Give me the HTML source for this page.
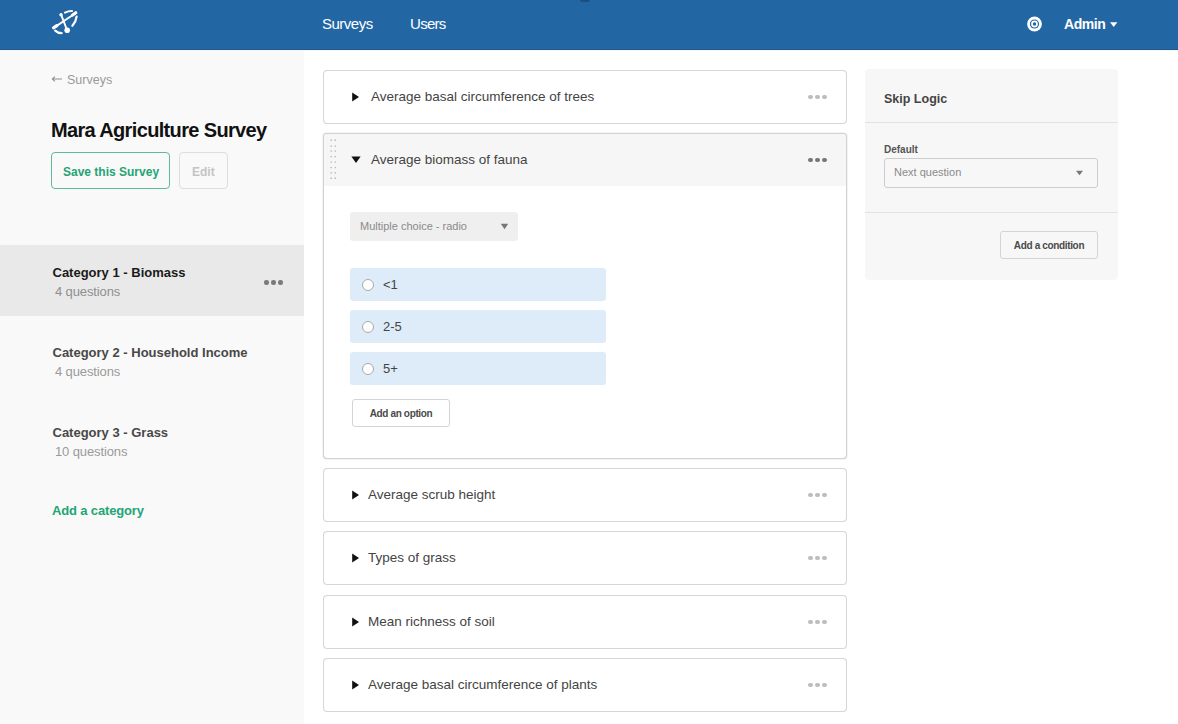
<!DOCTYPE html>
<html><head><meta charset="utf-8">
<style>
*{margin:0;padding:0;box-sizing:border-box}
html,body{width:1178px;height:724px;overflow:hidden;background:#fff;font-family:"Liberation Sans",sans-serif;position:relative}
.a{position:absolute;white-space:nowrap}
#hdr{position:absolute;left:0;top:0;width:1178px;height:50px;background:#2366a4;border-bottom:1px solid #22598c;z-index:3}
#hl{position:absolute;left:0;top:50px;width:1178px;height:1px;background:#f3f7fb;z-index:2}
#side{position:absolute;left:0;top:49px;width:304px;height:675px;background:#f9f9f9}
.card{position:absolute;left:323px;width:524px;height:54px;border:1px solid #d6d6d6;border-radius:4px;background:#fff;box-shadow:0 0 0.6px rgba(0,0,0,.12)}
.tri{position:absolute;width:0;height:0;border-top:4.5px solid transparent;border-bottom:4.5px solid transparent;border-left:7px solid #111}
.ct{position:absolute;left:371px;font-size:13.5px;color:#444}
.dots{position:absolute;width:20px;height:5px}
.dots i{position:absolute;top:0;width:4.5px;height:4.5px;border-radius:50%;background:#bdbdbd}
.dots i:nth-child(1){left:0}.dots i:nth-child(2){left:7px}.dots i:nth-child(3){left:14px}
.opt{position:absolute;left:350px;width:256px;height:33px;background:#deecfa;border-radius:3px}
.radio{position:absolute;left:12px;top:10.5px;width:12px;height:12px;border:1px solid #a9a9a9;border-radius:50%;background:#fff}
.otx{position:absolute;left:33px;top:9px;font-size:13px;color:#444}
.sbtn{position:absolute;border:1px solid #d4d4d4;border-radius:3px;font-weight:bold;font-size:10px;letter-spacing:-0.35px;color:#4a4a4a;text-align:center}
</style></head><body>
<div id="hdr">
  <svg class="a" style="left:48px;top:6px" width="36" height="36" viewBox="48 6 36 36">
    <g fill="none" stroke="#fff" stroke-linecap="round">
      <path d="M65 12.6 Q68.4 10.9 72 11" stroke-width="2.1"/>
      <path d="M76.6 16.6 Q76 21.6 72.4 25.8" stroke-width="2.2"/>
      <path d="M55.2 30.6 Q58 33.2 61.6 33.2" stroke-width="2.2"/>
      <path d="M54 27.6 L75.4 13.2" stroke-width="1.9"/>
      <path d="M61.2 14.8 L67 30" stroke-width="1.9"/>
      <path d="M53.6 27.8 L56.8 25.6" stroke-width="3.2"/>
      <path d="M72.6 15 L75.8 12.8" stroke-width="3.2"/>
    </g>
    <circle cx="67.2" cy="30.2" r="2.8" fill="#fff"/>
    <circle cx="61" cy="14.8" r="1.7" fill="#fff"/>
  </svg>
  <div class="a" style="left:322px;top:15px;font-size:15px;letter-spacing:-0.5px;color:#fff">Surveys</div>
  <div class="a" style="left:410px;top:15px;font-size:15px;letter-spacing:-0.7px;color:#fff">Users</div>
  <div class="a" style="left:580px;top:-1.5px;width:10px;height:3px;border-radius:50%;background:#1d4f7c"></div>
  <svg class="a" style="left:1026px;top:16px" width="17" height="17" viewBox="0 0 17 17">
    <circle cx="8.5" cy="8" r="7.4" fill="#fff"/>
    <circle cx="8.5" cy="8" r="4.6" fill="#2366a4"/>
    <circle cx="8.5" cy="8" r="3.4" fill="#fff"/>
    <circle cx="8.5" cy="8" r="1.7" fill="#2366a4"/>
  </svg>
  <div class="a" style="left:1064px;top:15.5px;font-size:14px;letter-spacing:-0.45px;font-weight:bold;color:#fff">Admin</div>
  <svg class="a" style="left:1109px;top:21px" width="10" height="7"><path d="M1 1.2 L8.4 1.2 L4.7 5.9 Z" fill="#fff"/></svg>
</div>

<div id="hl"></div>
<div id="side">
  <svg class="a" style="left:50px;top:25px" width="14" height="10"><path d="M2.4 5 L12 5 M4.9 2.6 L2.4 5 L4.9 7.4" fill="none" stroke="#8f8f8f" stroke-width="1.1"/></svg><div class="a" style="left:67px;top:24px;font-size:12.5px;color:#9a9a9a">Surveys</div>
  <div class="a" style="left:51px;top:70px;font-size:20px;letter-spacing:-0.65px;font-weight:bold;color:#111">Mara Agriculture Survey</div>
  <div class="a" style="left:51px;top:103px;width:119px;height:37px;border:1.5px solid #5dbb97;border-radius:4px"></div>
  <div class="a" style="left:63px;top:115.5px;font-size:12px;font-weight:bold;color:#24a474">Save this Survey</div>
  <div class="a" style="left:179px;top:103px;width:49px;height:37px;border:1.5px solid #dedede;border-radius:4px"></div>
  <div class="a" style="left:192px;top:115.5px;font-size:12px;font-weight:bold;color:#c4c4c4">Edit</div>

  <div class="a" style="left:0;top:196px;width:304px;height:71px;background:#e9e9e9"></div>
  <div class="a" style="left:52.5px;top:216px;font-size:13px;font-weight:bold;color:#1a1a1a">Category 1 - Biomass</div>
  <div class="a" style="left:55px;top:235px;font-size:13px;letter-spacing:-0.12px;color:#8f8f8f">4 questions</div>
  <div class="dots" style="left:264px;top:231px"><i style="background:#7a7a7a"></i><i style="background:#7a7a7a"></i><i style="background:#7a7a7a"></i></div>

  <div class="a" style="left:52.5px;top:296px;font-size:13px;font-weight:bold;color:#484848">Category 2 - Household Income</div>
  <div class="a" style="left:55px;top:315px;font-size:13px;letter-spacing:-0.12px;color:#9a9a9a">4 questions</div>
  <div class="a" style="left:52.5px;top:376px;font-size:13px;font-weight:bold;color:#484848">Category 3 - Grass</div>
  <div class="a" style="left:55px;top:395px;font-size:13px;letter-spacing:-0.12px;color:#9a9a9a">10 questions</div>
  <div class="a" style="left:52px;top:454px;font-size:13px;letter-spacing:-0.15px;font-weight:bold;color:#20a673">Add a category</div>
</div>

<!-- cards -->
<div class="card" style="top:70px"></div>
<svg class="a" style="left:351px;top:92.0px" width="10" height="11"><path d="M1.2 0.6 L8 5 L1.2 9.4 Z" fill="#111"/></svg>
<div class="ct" style="top:89px">Average basal circumference of trees</div>
<div class="dots" style="left:808px;top:94.5px"><i></i><i></i><i></i></div>

<div class="card" style="top:133px;height:326px;border-color:#d2d2d2;overflow:hidden;box-shadow:0 0 1.2px rgba(0,0,0,.3)">
  <div class="a" style="left:0;top:0;width:523px;height:52px;background:#f6f6f6"></div>
</div>
<svg class="a" style="left:329px;top:138px" width="10" height="44" viewBox="0 0 10 44">
  <g fill="#bdbdbd"><circle cx="2.2" cy="2.2" r="0.85"/><circle cx="6.3" cy="2.2" r="0.85"/><circle cx="2.2" cy="8.1" r="0.85"/><circle cx="6.3" cy="8.1" r="0.85"/><circle cx="2.2" cy="13.0" r="0.85"/><circle cx="6.3" cy="13.0" r="0.85"/><circle cx="2.2" cy="18.6" r="0.85"/><circle cx="6.3" cy="18.6" r="0.85"/><circle cx="2.2" cy="24.0" r="0.85"/><circle cx="6.3" cy="24.0" r="0.85"/><circle cx="2.2" cy="29.5" r="0.85"/><circle cx="6.3" cy="29.5" r="0.85"/><circle cx="2.2" cy="34.8" r="0.85"/><circle cx="6.3" cy="34.8" r="0.85"/><circle cx="2.2" cy="40.2" r="0.85"/><circle cx="6.3" cy="40.2" r="0.85"/></g>
</svg>
<svg class="a" style="left:350px;top:155px" width="12" height="10"><path d="M1.4 1.4 L10.6 1.4 L6 8 Z" fill="#111"/></svg>
<div class="ct" style="top:152px">Average biomass of fauna</div>
<div class="dots" style="left:808px;top:157.5px"><i style="background:#777"></i><i style="background:#777"></i><i style="background:#777"></i></div>

<div class="a" style="left:350px;top:212px;width:168px;height:29px;background:#efefef;border-radius:3px"></div>
<div class="a" style="left:360px;top:220px;font-size:11px;color:#8a8a8a">Multiple choice - radio</div>
<svg class="a" style="left:500px;top:223px" width="10" height="8"><path d="M0.8 0.8 L8.2 0.8 L4.5 6.2 Z" fill="#777"/></svg>

<div class="opt" style="top:268px"><div class="radio"></div><div class="otx">&lt;1</div></div>
<div class="opt" style="top:310px"><div class="radio"></div><div class="otx">2-5</div></div>
<div class="opt" style="top:352px"><div class="radio"></div><div class="otx">5+</div></div>
<div class="sbtn" style="left:352px;top:399px;width:98px;height:28px;line-height:28px;background:#fff">Add an option</div>

<div class="card" style="top:468px"></div>
<svg class="a" style="left:351px;top:490.0px" width="10" height="11"><path d="M1.2 0.6 L8 5 L1.2 9.4 Z" fill="#111"/></svg>
<div class="ct" style="left:368px;top:487px">Average scrub height</div>
<div class="dots" style="left:808px;top:492.5px"><i></i><i></i><i></i></div>

<div class="card" style="top:531px"></div>
<svg class="a" style="left:351px;top:553.0px" width="10" height="11"><path d="M1.2 0.6 L8 5 L1.2 9.4 Z" fill="#111"/></svg>
<div class="ct" style="left:368px;top:550px">Types of grass</div>
<div class="dots" style="left:808px;top:555.5px"><i></i><i></i><i></i></div>

<div class="card" style="top:595px"></div>
<svg class="a" style="left:351px;top:617.0px" width="10" height="11"><path d="M1.2 0.6 L8 5 L1.2 9.4 Z" fill="#111"/></svg>
<div class="ct" style="left:368px;top:614px">Mean richness of soil</div>
<div class="dots" style="left:808px;top:619.5px"><i></i><i></i><i></i></div>

<div class="card" style="top:658px"></div>
<svg class="a" style="left:351px;top:680.0px" width="10" height="11"><path d="M1.2 0.6 L8 5 L1.2 9.4 Z" fill="#111"/></svg>
<div class="ct" style="left:368px;top:677px">Average basal circumference of plants</div>
<div class="dots" style="left:808px;top:682.5px"><i></i><i></i><i></i></div>

<!-- skip logic panel -->
<div class="a" style="left:865px;top:69px;width:253px;height:211px;background:#f7f7f7;border-radius:4px"></div>
<div class="a" style="left:884px;top:92px;font-size:12.5px;font-weight:bold;color:#444">Skip Logic</div>
<div class="a" style="left:865px;top:122px;width:253px;height:1px;background:#e2e2e2"></div>
<div class="a" style="left:884px;top:143.5px;font-size:10px;font-weight:bold;color:#555">Default</div>
<div class="a" style="left:884px;top:158px;width:214px;height:30px;border:1.5px solid #cdcdcd;border-radius:3px;background:#f7f7f7"></div>
<div class="a" style="left:894px;top:166px;font-size:11px;color:#8a8a8a">Next question</div>
<svg class="a" style="left:1075px;top:170px" width="10" height="8"><path d="M1 0.7 L8 0.7 L4.5 5.3 Z" fill="#777"/></svg>
<div class="a" style="left:865px;top:212px;width:253px;height:1px;background:#e2e2e2"></div>
<div class="sbtn" style="left:1000px;top:231px;width:98px;height:28px;line-height:28px;background:#f7f7f7">Add a condition</div>
</body></html>
